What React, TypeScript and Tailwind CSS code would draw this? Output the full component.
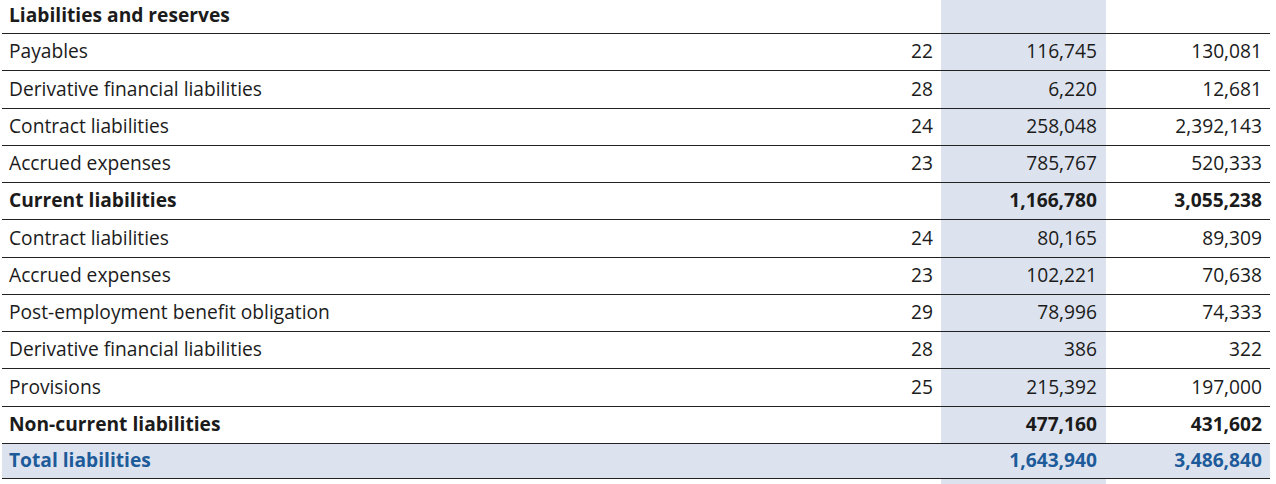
import React from "react";

type Row = { label: string; note?: string; a: string; b: string; kind?: "bold" | "normal" };

const rows: Row[] = [
  { label: "Payables", note: "22", a: "116,745", b: "130,081" },
  { label: "Derivative financial liabilities", note: "28", a: "6,220", b: "12,681" },
  { label: "Contract liabilities", note: "24", a: "258,048", b: "2,392,143" },
  { label: "Accrued expenses", note: "23", a: "785,767", b: "520,333" },
  { label: "Current liabilities", a: "1,166,780", b: "3,055,238", kind: "bold" },
  { label: "Contract liabilities", note: "24", a: "80,165", b: "89,309" },
  { label: "Accrued expenses", note: "23", a: "102,221", b: "70,638" },
  { label: "Post-employment benefit obligation", note: "29", a: "78,996", b: "74,333" },
  { label: "Derivative financial liabilities", note: "28", a: "386", b: "322" },
  { label: "Provisions", note: "25", a: "215,392", b: "197,000" },
  { label: "Non-current liabilities", a: "477,160", b: "431,602", kind: "bold" },
];

const grid = "grid grid-cols-[1fr_165px_165px_164px]";

export default function App() {
  return (
    <div
      className="w-[1276px] h-[484px] bg-white text-[#1b1b1b] text-[19.2px] overflow-hidden"
      style={{ fontFamily: '"Open Sans", "Noto Sans", sans-serif' }}
    >
      <div className="ml-[2px] w-[1268px]">
        <div className={`${grid} h-[34px] pb-[3px] border-b border-[#222]`}>
          <div className="pl-[7px] flex items-center font-bold">Liabilities and reserves</div>
          <div />
          <div className="bg-[#dde3ee] -mb-[3px]" />
          <div />
        </div>
        {rows.map((r, i) => (
          <div key={i} className={`${grid} h-[37.27px] border-b border-[#222] ${r.kind === "bold" ? "font-bold" : ""}`}>
            <div className="pl-[7px] pb-px flex items-center">{r.label}</div>
            <div className="pr-2 pb-px flex items-center justify-end">{r.note ?? ""}</div>
            <div className="bg-[#dde3ee] pr-[9px] pb-px flex items-center justify-end">{r.a}</div>
            <div className="pr-2 pb-px flex items-center justify-end">{r.b}</div>
          </div>
        ))}
        <div className={`${grid} h-[35px] border-b border-[#222] bg-[#dde3ee] font-bold text-[#1d5b9a]`}>
          <div className="pl-[7px] pb-px flex items-center">Total liabilities</div>
          <div />
          <div className="pr-[9px] pb-px flex items-center justify-end">1,643,940</div>
          <div className="pr-2 pb-px flex items-center justify-end">3,486,840</div>
        </div>
        <div className={`${grid} h-[8px]`}>
          <div />
          <div />
          <div className="bg-[#dde3ee]" />
          <div />
        </div>
      </div>
    </div>
  );
}
